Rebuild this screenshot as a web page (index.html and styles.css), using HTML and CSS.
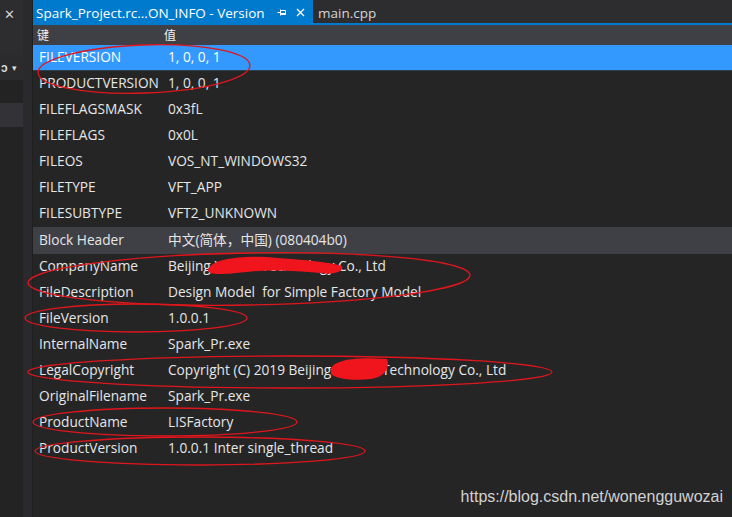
FILE: index.html
```html
<!DOCTYPE html>
<html>
<head>
<meta charset="utf-8">
<link rel="stylesheet" href="styles.css">
</head>
<body>
<div class="app">
  <div class="side">
    <div class="side-top"><span class="side-x">✕</span></div>
    <div class="side-gap"></div>
    <div class="side-drop"><span class="side-o">ↄ</span><span class="side-caret">▾</span></div>
    <div class="side-gap2"></div>
    <div class="side-item"></div>
  </div>
  <div class="splitter"></div>
  <div class="main">
    <div class="tabbar">
      <div class="tab active">
        <span class="tab-title">Spark_Project.rc...ON_INFO - Version</span>
        <svg class="pin" width="10" height="9" viewBox="0 0 10 9"><path d="M0.5 4.5H3.5M3.5 1.5V7.5M3.5 2.5H8.5V6.5H3.5M3.5 5.5H8.5" fill="none" stroke="#fff" stroke-width="1"/></svg>
        <svg class="close" width="9" height="9" viewBox="0 0 9 9"><path d="M1 1L8 8M8 1L1 8" stroke="#fff" stroke-width="1.3"/></svg>
      </div>
      <div class="tab">main.cpp</div>
    </div>
    <div class="tabline"></div>
    <div class="grid-head">
      <span class="k">键</span><span class="v">值</span>
    </div>
    <div class="row selected"><span class="k">FILEVERSION</span><span class="v">1, 0, 0, 1</span></div>
    <div class="row"><span class="k">PRODUCTVERSION</span><span class="v">1, 0, 0, 1</span></div>
    <div class="row"><span class="k">FILEFLAGSMASK</span><span class="v">0x3fL</span></div>
    <div class="row"><span class="k">FILEFLAGS</span><span class="v">0x0L</span></div>
    <div class="row"><span class="k">FILEOS</span><span class="v">VOS_NT_WINDOWS32</span></div>
    <div class="row"><span class="k">FILETYPE</span><span class="v">VFT_APP</span></div>
    <div class="row"><span class="k">FILESUBTYPE</span><span class="v">VFT2_UNKNOWN</span></div>
    <div class="row block"><span class="k">Block Header</span><span class="v">中文(简体，中国) (080404b0)</span></div>
    <div class="row"><span class="k">CompanyName</span><span class="v">Beijing Xxxxxx Technology Co., Ltd</span></div>
    <div class="row"><span class="k">FileDescription</span><span class="v">Design Model&nbsp; for Simple Factory Model</span></div>
    <div class="row"><span class="k">FileVersion</span><span class="v">1.0.0.1</span></div>
    <div class="row"><span class="k">InternalName</span><span class="v">Spark_Pr.exe</span></div>
    <div class="row"><span class="k">LegalCopyright</span><span class="v">Copyright (C) 2019 Beijing Xxxxxx Technology Co., Ltd</span></div>
    <div class="row"><span class="k">OriginalFilename</span><span class="v">Spark_Pr.exe</span></div>
    <div class="row"><span class="k">ProductName</span><span class="v">LISFactory</span></div>
    <div class="row"><span class="k">ProductVersion</span><span class="v">1.0.0.1 Inter single_thread</span></div>
    <div class="watermark">https://blog.csdn.net/wonengguwozai</div>
  </div>
</div>
<svg class="marks" width="732" height="517" viewBox="0 0 732 517">
  <g fill="none" stroke="#e0161c" stroke-width="1.3">
    <ellipse cx="144" cy="69" rx="106" ry="24" transform="rotate(-2 144 69)"/>
    <ellipse cx="249" cy="279" rx="221" ry="26" transform="rotate(-1 249 279)"/>
    <ellipse cx="136" cy="318" rx="111" ry="14"/>
    <ellipse cx="290" cy="372" rx="262" ry="16"/>
    <ellipse cx="165" cy="422" rx="132" ry="14"/>
    <ellipse cx="200" cy="451" rx="165" ry="14"/>
  </g>
  <g fill="#f0141c">
    <path d="M208 270 C212 257 250 255 278 258 C305 260 328 262 342 266 C344 271 336 275 320 273 C296 271 272 269 247 272 C226 274 208 276 208 270 Z"/>
    <path d="M331 369 C334 359 360 357 387 359 C390 366 386 377 371 379 C354 381 336 379 331 374 Z"/>
  </g>
</svg>
</body>
</html>
```
FILE: styles.css
```css
html, body {
  margin: 0;
  padding: 0;
  background: #252526;
  width: 732px;
  height: 517px;
  overflow: hidden;
}
.app {
  display: flex;
  height: 517px;
  font-family: "Open Sans", "Noto Sans CJK SC", sans-serif;
  font-size: 13.7px;
  color: #e6e6e6;
}
.side {
  width: 23px;
  background: #232323;
  display: flex;
  flex-direction: column;
}
.side-top {
  height: 50px;
  background: #2d2d30;
}
.side-x {
  display: block;
  color: #d0d0d0;
  font-size: 13px;
  line-height: 28px;
  padding-left: 4px;
}
.side-gap { height: 5px; background: #2d2d30; }
.side-drop {
  height: 25px;
  background: #2b2b2d;
  display: flex;
  align-items: center;
  gap: 4px;
  color: #ddd;
  font-size: 12px;
  padding-left: 1px;
}
.side-o { font-weight: bold; }
.side-caret { font-size: 9px; }
.side-gap2 { height: 23px; background: #232323; }
.side-item { height: 24px; background: #333337; }
.splitter {
  width: 9px;
  background: #2a2a2c;
  border-right: 1px solid #1f1f1f;
}
.main {
  flex: 1;
  display: flex;
  flex-direction: column;
  background: #252526;
}
.tabbar {
  height: 23px;
  background: #2d2d30;
  display: flex;
  align-items: stretch;
}
.tab {
  display: flex;
  align-items: center;
  padding: 2px 5px 0;
  color: #d4d4d4;
  font-size: 13.5px;
}
.tab.active {
  background: #007acc;
  color: #ffffff;
  width: 272px;
  padding-left: 3px;
}
.tab-title { flex: 1; }
.pin { margin-right: 9px; }
.close { margin-right: 3px; }
.tabline { height: 2px; background: #007acc; }
.grid-head {
  height: 20px;
  background: #3f3f46;
  display: flex;
  align-items: center;
  color: #f1f1f1;
  font-size: 12px;
}
.grid-head .k { width: 127px; padding-left: 4px; }
.row {
  height: 26px;
  display: flex;
  align-items: center;
  line-height: 22px;
  padding-bottom: 2px;
  box-sizing: border-box;
}
.row .k { width: 130px; padding-left: 6px; flex: none; }
.row .v { white-space: nowrap; margin-left: -1px; }
.row.selected { background: #3399ff; color: #ffffff; border-bottom: 1px solid #2d3f52; }
.row.block { background: #3f3f46; height: 27px; }
.watermark {
  margin-top: auto;
  align-self: flex-end;
  font-family: "Liberation Sans", Arial, sans-serif;
  font-size: 16px;
  color: #d2d2d2;
  margin-right: 9px;
  margin-bottom: 11px;
}
.marks {
  position: absolute;
  left: 0;
  top: 0;
  pointer-events: none;
}
```
